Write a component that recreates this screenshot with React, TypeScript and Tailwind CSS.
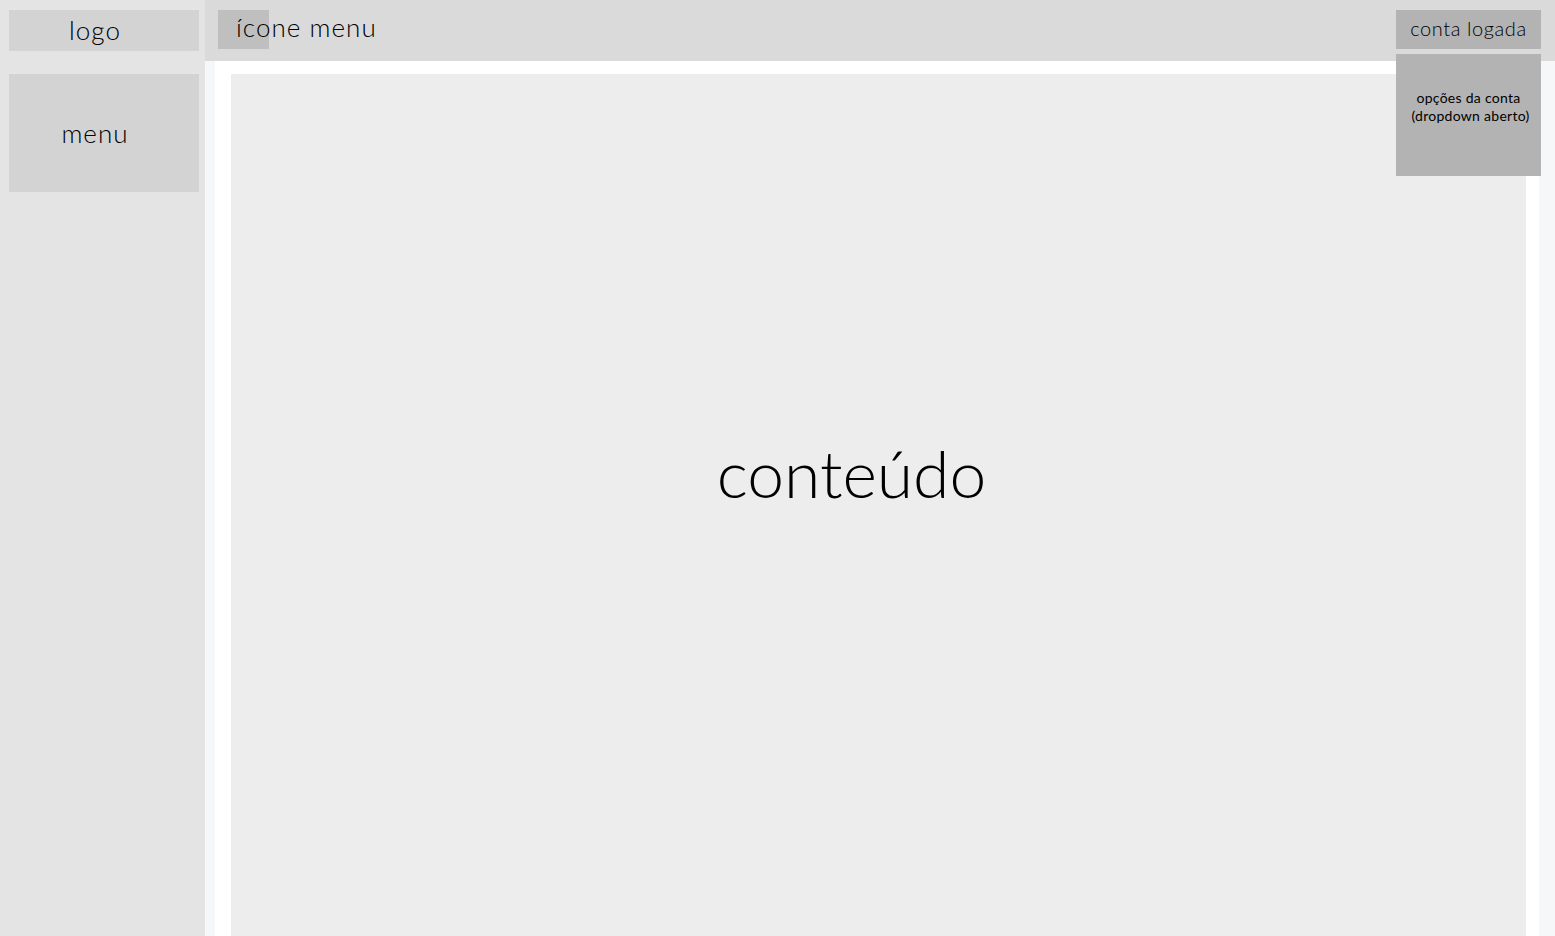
import React from 'react'

// ─── Layout wireframe ──────────────────────────────
const font = { fontFamily: '"Lato", "Liberation Sans", sans-serif' }

function Sidebar() {
    return (
        <aside className="w-[205px] shrink-0 bg-[#e4e4e4] pl-[9px] pr-[6px] pt-[10px] flex flex-col gap-[23px]">
            <div className="h-[41px] bg-[#d3d3d3] flex items-center justify-center text-[26px] leading-[30px] pb-[2px] tracking-[0.04em] font-light text-black pr-[18px]">
                logo
            </div>
            <div className="h-[118px] bg-[#d3d3d3] flex items-center justify-center text-[26px] tracking-[0.04em] font-light text-black pr-[18px]">
                menu
            </div>
        </aside>
    )
}

function Header() {
    return (
        <header className="h-[61px] shrink-0 bg-[#dadada] flex items-start justify-between pl-[13px] pr-[14px] pt-[10px]">
            <div className="relative h-[39px] flex items-center">
                <div className="w-[51px] h-[39px] bg-[#bfbfbf]" />
                {/* label sits over the icon box */}
                <span className="absolute left-[18px] top-[2px] text-[26px] leading-[30px] tracking-[0.04em] font-light text-black whitespace-nowrap">
                    ícone menu
                </span>
            </div>

            <div className="relative">
                <div className="w-[145px] h-[39px] bg-[#b3b3b3] flex items-center justify-center pb-[3px] text-[20px] tracking-[0.03em] font-light text-black">
                    conta logada
                </div>
                {/* open dropdown */}
                <div className="absolute z-10 top-[44px] left-0 w-[145px] h-[122px] bg-[#b3b3b3] flex flex-col items-center pt-[35px] text-[14px] leading-[18px] tracking-[0.02em] text-black">
                    <span>opções da conta</span>
                    <span className="pl-[4px]">(dropdown aberto)</span>
                </div>
            </div>
        </header>
    )
}

export default function App() {
    return (
        <div className="h-[936px] w-full flex overflow-hidden bg-white" style={font}>
            <Sidebar />
            <div className="flex-1 flex flex-col min-w-0">
                <Header />
                <div className="flex-1 flex bg-[#f6f7f9] pl-[10px] pr-[16px] min-h-0">
                    <div className="flex-1 flex bg-white pl-[16px] pr-[13px] pt-[13px] min-h-0">
                        <main className="flex-1 bg-[#ededed] flex items-center justify-center pr-[54px] pb-[64px]">
                            <span className="text-[66px] text-black font-light leading-none">conteúdo</span>
                        </main>
                    </div>
                </div>
            </div>
        </div>
    )
}
